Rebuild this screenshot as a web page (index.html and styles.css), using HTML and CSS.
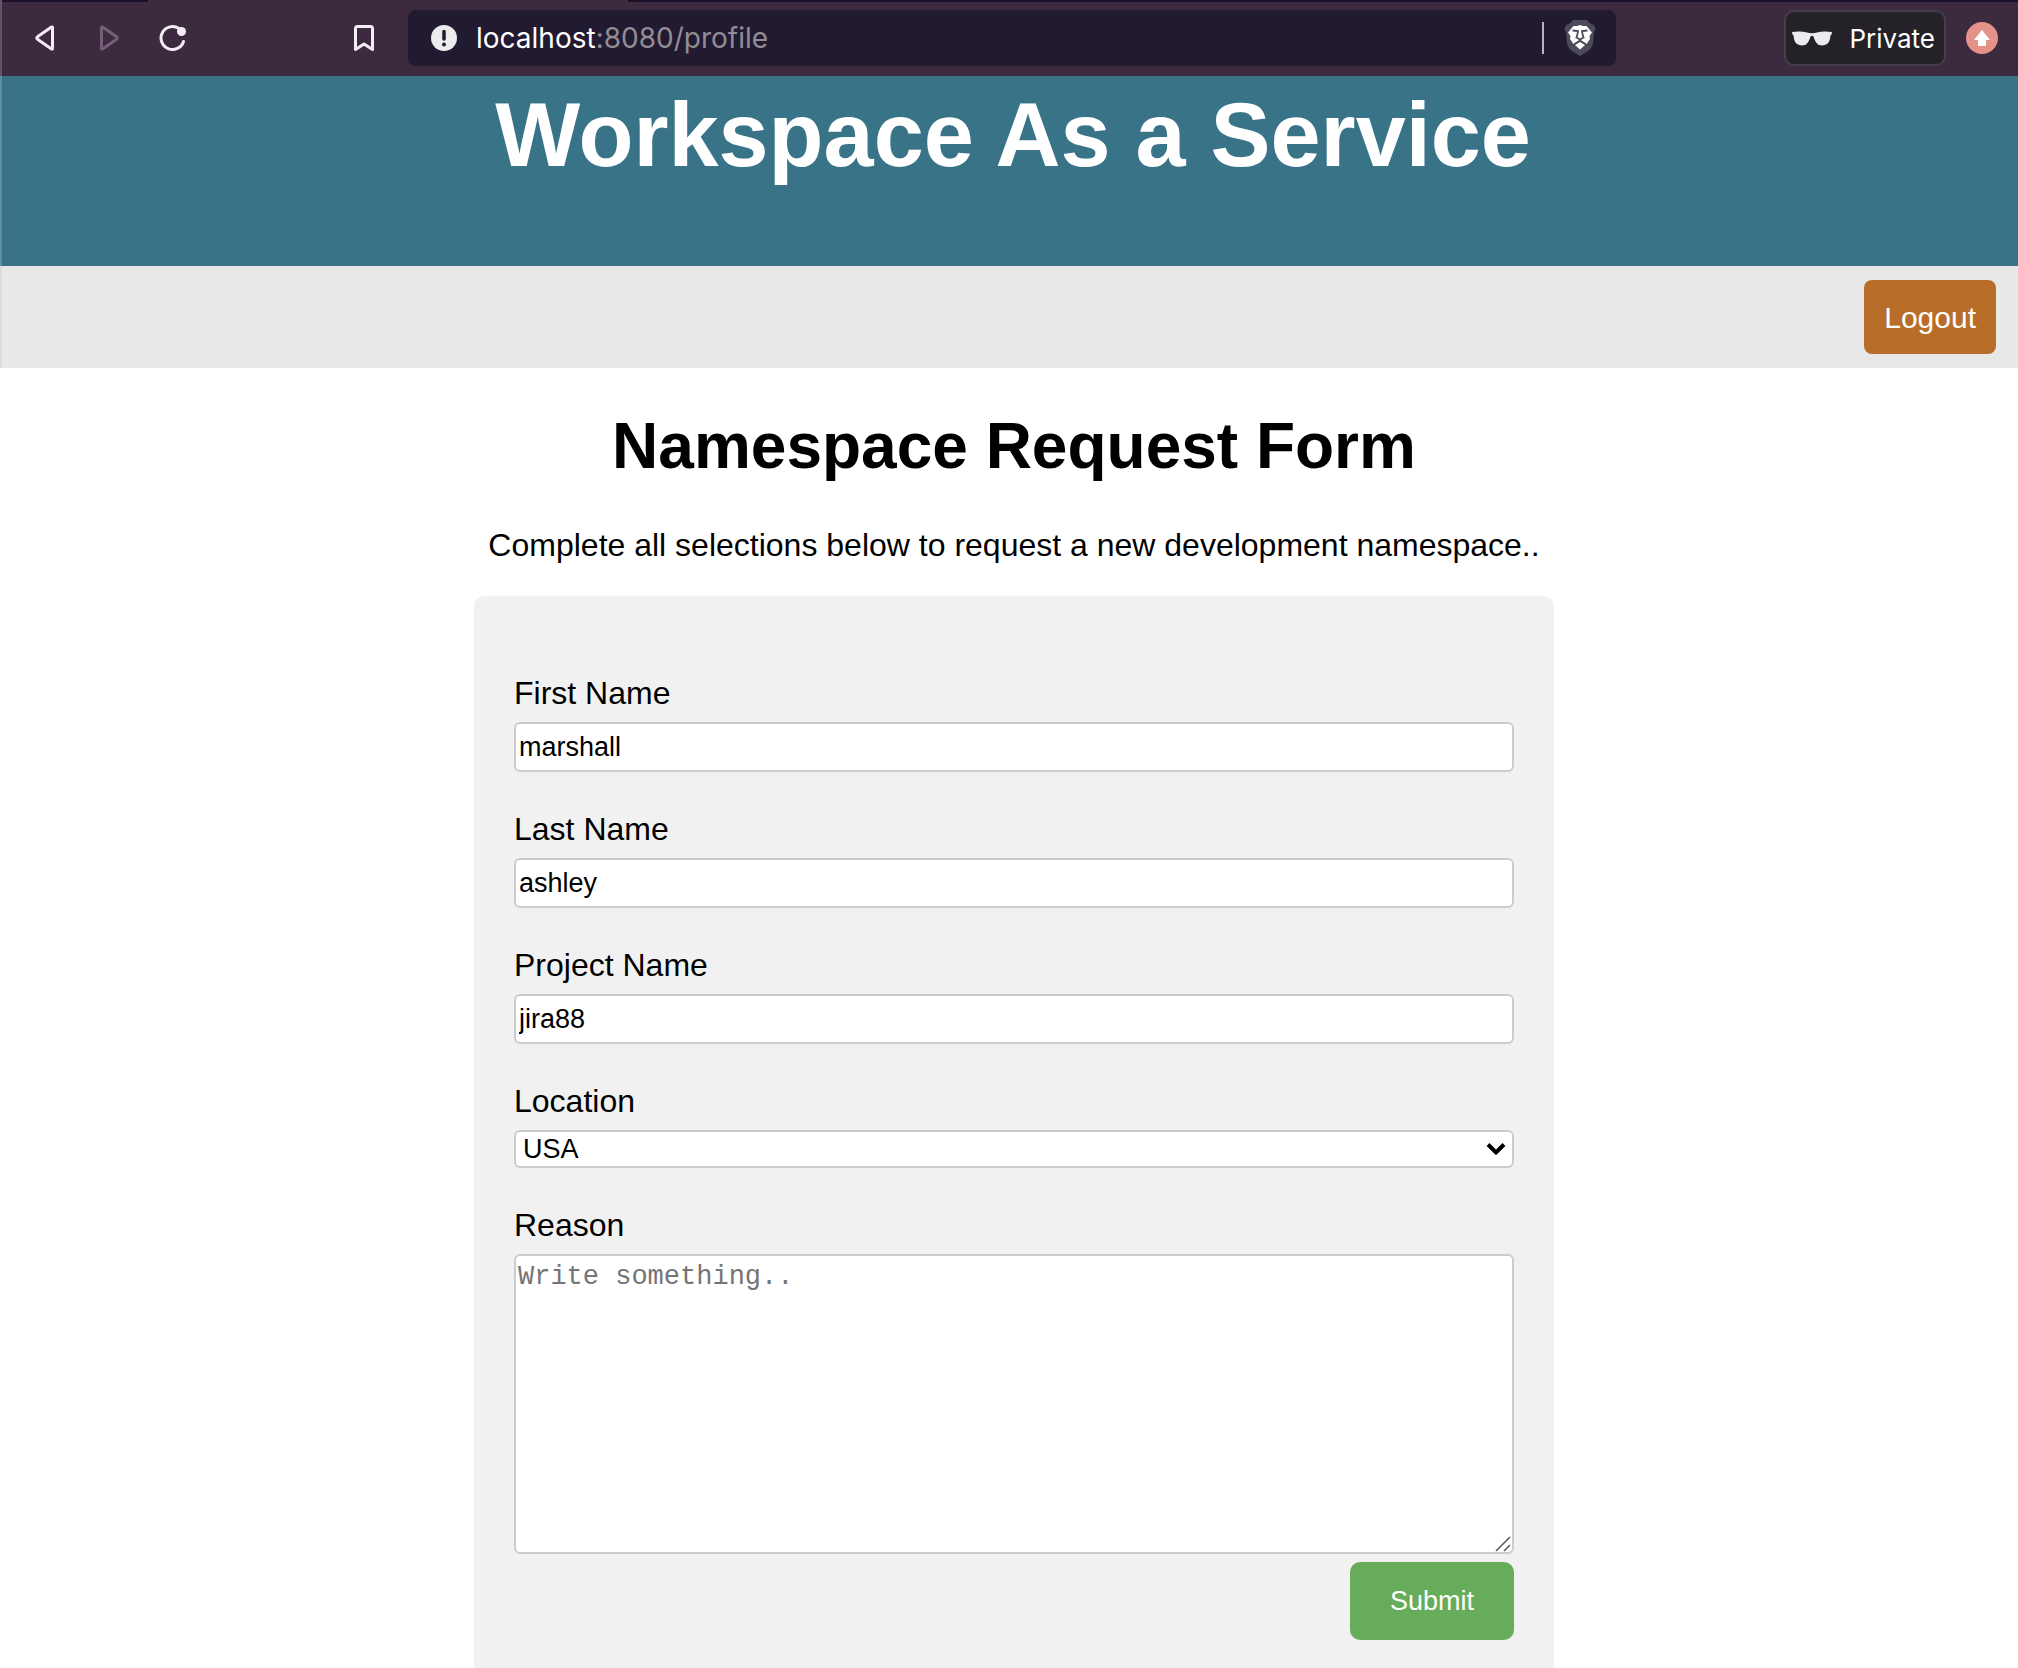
FILE: index.html
```html
<!DOCTYPE html>
<html lang="en">
<head>
<meta charset="utf-8">
<meta name="viewport" content="width=device-width, initial-scale=1">
<title>Workspace As a Service</title>
<link rel="stylesheet" href="styles.css">
</head>
<body>
<div class="toolbar">
  <div class="tab-edge"><span class="tab-edge-start"></span><span class="tab-edge-end"></span></div>
  <div class="toolbar-row">
    <nav class="nav-buttons" aria-label="Browser">
      <button class="icon-button" type="button" aria-label="Back">
        <svg width="28" height="28" viewBox="0 0 28 28" fill="none" stroke="#f3edf4" stroke-width="3" stroke-linejoin="round"><path d="M21.500 3.600V24.400Q21.500 25.500 20.500 24.900L6.500 15.200Q5 14 6.500 12.800L20.500 3.100Q21.500 2.500 21.500 3.600Z"/></svg>
      </button>
      <button class="icon-button" type="button" aria-label="Forward" disabled>
        <svg width="28" height="28" viewBox="0 0 28 28" fill="none" stroke="#755f78" stroke-width="3" stroke-linejoin="round"><path d="M6.500 3.600V24.400Q6.500 25.500 7.500 24.900L21.500 15.200Q23 14 21.500 12.800L7.500 3.100Q6.500 2.500 6.500 3.600Z"/></svg>
      </button>
      <button class="icon-button" type="button" aria-label="Reload">
        <svg width="28" height="28" viewBox="0 0 28 28" fill="none" stroke="#f3edf4" stroke-width="3" stroke-linecap="round"><path d="M20 4.500A11.500 11.500 0 1 0 24.500 17.500"/><circle cx="22.500" cy="7.500" r="4.500" fill="#f3edf4" stroke="none"/></svg>
      </button>
    </nav>
    <button class="icon-button" type="button" aria-label="Bookmark">
      <svg width="28" height="28" viewBox="0 0 28 28" fill="none" stroke="#f3edf4" stroke-width="3" stroke-linejoin="round"><path d="M7.500 2.500H20.500Q22.500 2.500 22.500 4.500V25.500L14 20L5.500 25.500V4.500Q5.500 2.500 7.500 2.500Z"/></svg>
    </button>
    <div class="address">
      <svg width="26" height="26" viewBox="0 0 26 26"><circle cx="13" cy="13" r="13" fill="#ececee"/><path d="M13 6.500V14" stroke="#221a30" stroke-width="3.500" stroke-linecap="round"/><circle cx="13" cy="19.500" r="2" fill="#221a30"/></svg>
      <div class="address-text" role="textbox" aria-label="Address"><span class="address-host">localhost</span>:8080/profile</div>
      <span class="address-divider"></span>
      <button class="icon-button" type="button" aria-label="Shields">
        <svg width="32" height="36" viewBox="0 0 32 36"><path fill="#4c4b5b" d="M9 0H23L26 3.500L30 5L31.500 9L30 12L29 23Q28 28 24 31L16 36L8 31Q4 28 3 23L2 12L0.500 9L2 5L6 3.500Z"/><path fill="#fff" d="M9.500 6L13 6L16 5L19 6L22.500 6L28 12.500L25.500 16L26 19L22.500 24L16 20.500L9.500 24L6 19L6.500 16L4 12.500Z"/><path fill="#fff" d="M11 25L16 22L21 25L16 29.500Z"/><path d="M8.500 10.500L14 11L13.500 14L12.500 17.500L16 19.500L19.500 17.500L18.500 14L18 11L23.500 10.500" fill="none" stroke="#4c4b5b" stroke-width="1.800"/><path d="M10.500 24L16 20.500L21.500 24" fill="none" stroke="#4c4b5b" stroke-width="1.500"/></svg>
      </button>
    </div>
    <button class="private" type="button">
      <svg width="40" height="16" viewBox="0 0 40 16"><path fill="#ececee" d="M0 1Q9 0 15 1.500Q20 3 25 1.500Q31 0 40 1L39.500 3.500L38.500 4.500Q38 11 35 13Q31 15.500 26 13.500Q23 11 21.500 5.500Q20 4 18.500 5.500Q17 11 14 13.500Q9 15.500 5 13Q2 11 1.500 4.500L0.500 3.500Z"/></svg>
      <span>Private</span>
    </button>
    <button class="icon-button" type="button" aria-label="Update available">
      <svg width="32" height="32" viewBox="0 0 32 32"><circle cx="16" cy="16" r="16" fill="#e59388"/><path fill="#fff" d="M16 8L24 18H20V24H12V18H8Z"/></svg>
    </button>
  </div>
</div>

<header class="banner"><h1 class="banner-title">Workspace As a Service</h1></header>
<nav class="menu" aria-label="Account"><button class="logout" type="button">Logout</button></nav>

<main class="content">
  <h2 class="form-title">Namespace Request Form</h2>
  <p class="intro">Complete all selections below to request a new development namespace..</p>
  <form class="card">
    <div class="field">
      <label for="fname">First Name</label>
      <input class="control" id="fname" type="text" value="marshall">
    </div>
    <div class="field">
      <label for="lname">Last Name</label>
      <input class="control" id="lname" type="text" value="ashley">
    </div>
    <div class="field">
      <label for="project">Project Name</label>
      <input class="control" id="project" type="text" value="jira88">
    </div>
    <div class="field">
      <label for="location">Location</label>
      <div class="overlay">
        <select class="control select" id="location"><option>USA</option></select>
        <svg class="chevron" width="20" height="14" viewBox="0 0 20 14" fill="none" stroke="#000" stroke-width="4"><path d="M2 2.500L10 10.500L18 2.500"/></svg>
      </div>
    </div>
    <div class="field">
      <label for="reason">Reason</label>
      <div class="overlay">
        <textarea class="control reason" id="reason" placeholder="Write something.."></textarea>
        <svg class="grip" width="16" height="16" viewBox="0 0 16 16" stroke="#555" stroke-width="1.500"><path d="M1 15L15 1M9 15L15 9"/></svg>
      </div>
    </div>
    <button class="submit" type="submit">Submit</button>
  </form>
</main>
</body>
</html>
```
FILE: styles.css
```css
* { box-sizing: border-box; }

body {
  margin: 0;
  min-height: 100vh;
  display: flex;
  flex-direction: column;
  background: #fff;
  color: #000;
  font-family: "Liberation Sans", Arial, sans-serif;
  font-size: 32px;
  line-height: 36px;
}

button { border: 0; font: inherit; cursor: pointer; }
svg { display: block; }

/* Browser toolbar */
.toolbar {
  height: 76px;
  background: #3c2a3f;
  border-left: 2px solid #635366;
  font-family: Inter, sans-serif;
}
.tab-edge { display: flex; justify-content: space-between; height: 2px; }
.tab-edge-start { width: 146px; background: #1a1029; }
.tab-edge-end { width: calc(100% - 626px); background: #1a1029; }
.toolbar-row {
  display: flex;
  align-items: center;
  height: 72px;
  padding: 0 20px 0 29px;
}
.nav-buttons { display: flex; gap: 36px; margin-right: 163px; }
.icon-button { padding: 0; background: none; }
.address {
  flex: 1;
  display: flex;
  align-items: center;
  height: 56px;
  margin: 0 168px 0 30px;
  padding: 0 20px 0 23px;
  border-radius: 8px;
  background: #221a30;
}
.address-text {
  flex: 1;
  margin-left: 19px;
  color: #918d96;
  font-size: 28px;
  white-space: nowrap;
}
.address-host { color: #fff; }
.address-divider { width: 2px; height: 32px; margin-right: 20px; background: #b8b5bc; }
.private {
  display: flex;
  align-items: center;
  justify-content: space-between;
  width: 162px;
  height: 56px;
  margin-right: 20px;
  padding: 2px 9px 0 6px;
  border: 2px solid #453d48;
  border-radius: 10px;
  background: #252129;
  color: #fff;
  font-size: 26px;
}

/* Page header */
.banner {
  height: 190px;
  padding: 7px 0 0 6px;
  border-left: 2px solid #5f8fa0;
  background: #387388;
  color: #fff;
  text-align: center;
}
.banner-title { margin: 0; font-size: 90px; line-height: 104px; }
.menu {
  display: flex;
  justify-content: flex-end;
  padding: 14px 22px;
  border-left: 2px solid #dcdcdc;
  background: #e8e8e8;
}
.logout {
  height: 74px;
  padding: 2px 20px 0;
  border-radius: 8px;
  background: #b86e29;
  color: #fff;
  font-size: 30px;
}

/* Request form */
.content {
  flex: 1;
  display: flex;
  flex-direction: column;
  align-items: center;
  padding: 41px 0 0 10px;
  text-align: center;
}
.form-title { margin: 0 0 44px; font-size: 64px; line-height: 74px; }
.intro { margin: 0 0 33px; }
.card {
  flex: 1;
  display: flex;
  flex-direction: column;
  gap: 39px;
  width: 100%;
  max-width: 1080px;
  padding: 79px 40px 28px;
  border-radius: 10px 10px 0 0;
  background: #f1f1f1;
  text-align: left;
}
.field { display: flex; flex-direction: column; gap: 11px; }
.control {
  width: 100%;
  height: 50px;
  margin: 0;
  padding: 2px 3px;
  border: 2px solid #ccc;
  border-radius: 6px;
  background: #fff;
  color: #000;
  font-family: "Liberation Sans", Arial, sans-serif;
  font-size: 27px;
  line-height: 30px;
}
.overlay { display: grid; }
.overlay > * { grid-area: 1 / 1; }
.select { height: 38px; padding: 0 7px; appearance: none; }
.chevron { place-self: center end; margin-right: 8px; pointer-events: none; }
.reason {
  height: 300px;
  padding: 6px 2px;
  font-family: "Liberation Mono", "Courier New", monospace;
  resize: none;
}
.reason::placeholder { color: #757575; }
.grip { place-self: end; margin: 0 3px 2px 0; pointer-events: none; }
.submit {
  align-self: flex-end;
  height: 78px;
  margin-top: -31px;
  padding: 0 40px;
  border-radius: 10px;
  background: #67ac5b;
  color: #fff;
  font-size: 27px;
}
```
